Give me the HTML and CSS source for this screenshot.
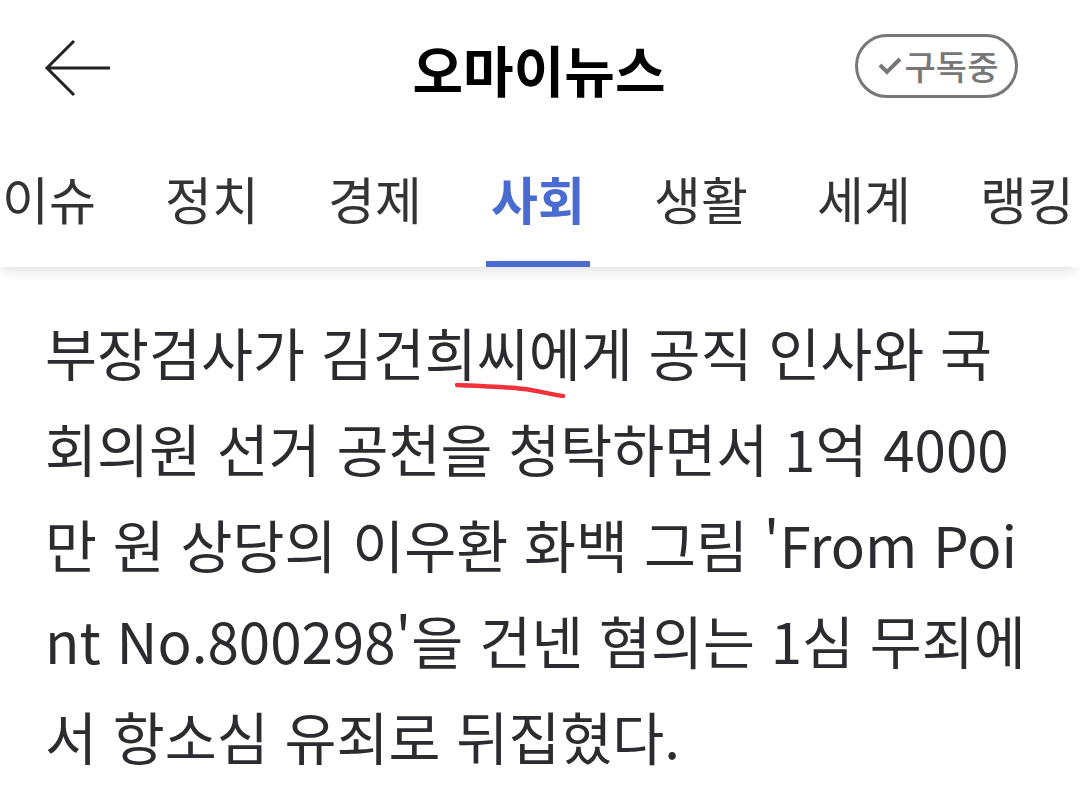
FILE: index.html
```html
<!DOCTYPE html>
<html lang="ko">
<head>
    <meta charset="UTF-8">
    <meta name="viewport" content="width=device-width, initial-scale=1.0">
    <title>오마이뉴스</title>
<link rel="stylesheet" href="styles.css">
</head>
<body>
    <div class="top-bar">
        <div class="top-left">
            <button class="back-btn" aria-label="뒤로">
                <svg width="68" height="58" viewBox="0 0 68 58">
                    <path d="M66 29H3M30 2L3 29l27 27" fill="none" stroke="#222" stroke-width="3" />
                </svg>
            </button>
        </div>
        <div class="title">오마이뉴스</div>
        <div class="top-right">
            <button class="subscribe-btn">
                <svg width="26" height="20" viewBox="0 0 26 20">
                    <path d="M3 9l7 7L23 3" fill="none" stroke="#777" stroke-width="4" />
                </svg>
                구독중
            </button>
        </div>
    </div>

    <div class="tabs">
        <div class="tab">이슈</div>
        <div class="tab">정치</div>
        <div class="tab">경제</div>
        <div class="tab active">사회</div>
        <div class="tab">생활</div>
        <div class="tab">세계</div>
        <div class="tab">랭킹</div>
    </div>

    <div class="article">
        부장검사가 김건<span class="marked">희씨에<svg class="squiggle" width="120" height="24" viewBox="0 0 120 24"><path d="M4 5C30 6 60 7 78 10S100 15 110 16" fill="none" stroke="#f2313b" stroke-width="4.5" stroke-linecap="round" /></svg></span>게 공직 인사와 국회의원 선거 공천을 청탁하면서 1억 4000만 원 상당의 이우환 화백 그림 'From Point No.800298'을 건넨 혐의는 1심 무죄에서 항소심 유죄로 뒤집혔다.
    </div>
</body>
</html>
```

FILE: styles.css
```css
body {
    margin: 0;
    background-color: #fff;
    font-family: "Noto Sans CJK KR", "Noto Sans", sans-serif;
    overflow: hidden;
}
button {
    font-family: inherit;
    background: none;
    border: none;
    padding: 0;
    cursor: pointer;
}
.top-bar {
    display: grid;
    grid-template-columns: 1fr auto 1fr;
    align-items: center;
    height: 135px;
}
.top-left {
    padding-left: 44px;
    display: flex;
}
.back-btn {
    display: flex;
}
.title {
    font-size: 55px;
    font-weight: bold;
    color: #000;
    margin-left: -2px;
}
.top-right {
    display: flex;
    justify-content: flex-end;
    padding-right: 62px;
}
.subscribe-btn {
    display: flex;
    align-items: center;
    justify-content: center;
    gap: 2px;
    width: 163px;
    height: 64px;
    margin-top: -4px;
    border: 3px solid #777;
    border-radius: 32px;
    box-sizing: border-box;
    color: #777;
    font-size: 34px;
    font-weight: 500;
    padding-left: 2px;
}
.tabs {
    display: flex;
    gap: 59px;
    height: 132px;
    margin-left: -3px;
    background-color: #fff;
    box-shadow: 0 9px 12px -5px rgba(0, 0, 0, 0.12);
    position: relative;
    white-space: nowrap;
}
.tab {
    display: flex;
    align-items: center;
    justify-content: center;
    width: 104px;
    font-size: 51px;
    color: #333;
    border-bottom: 6px solid transparent;
    padding-top: 0;
    box-sizing: border-box;
}
.tab.active {
    color: #4a6bd0;
    font-weight: bold;
    border-bottom-color: #4a6bd0;
}
.article {
    padding: 36px 44px 0 45px;
    font-size: 56.5px;
    line-height: 96px;
    color: #2c2c30;
    word-break: break-all;
}
.marked {
    position: relative;
}
.squiggle {
    position: absolute;
    left: 28px;
    top: 70px;
}
```
